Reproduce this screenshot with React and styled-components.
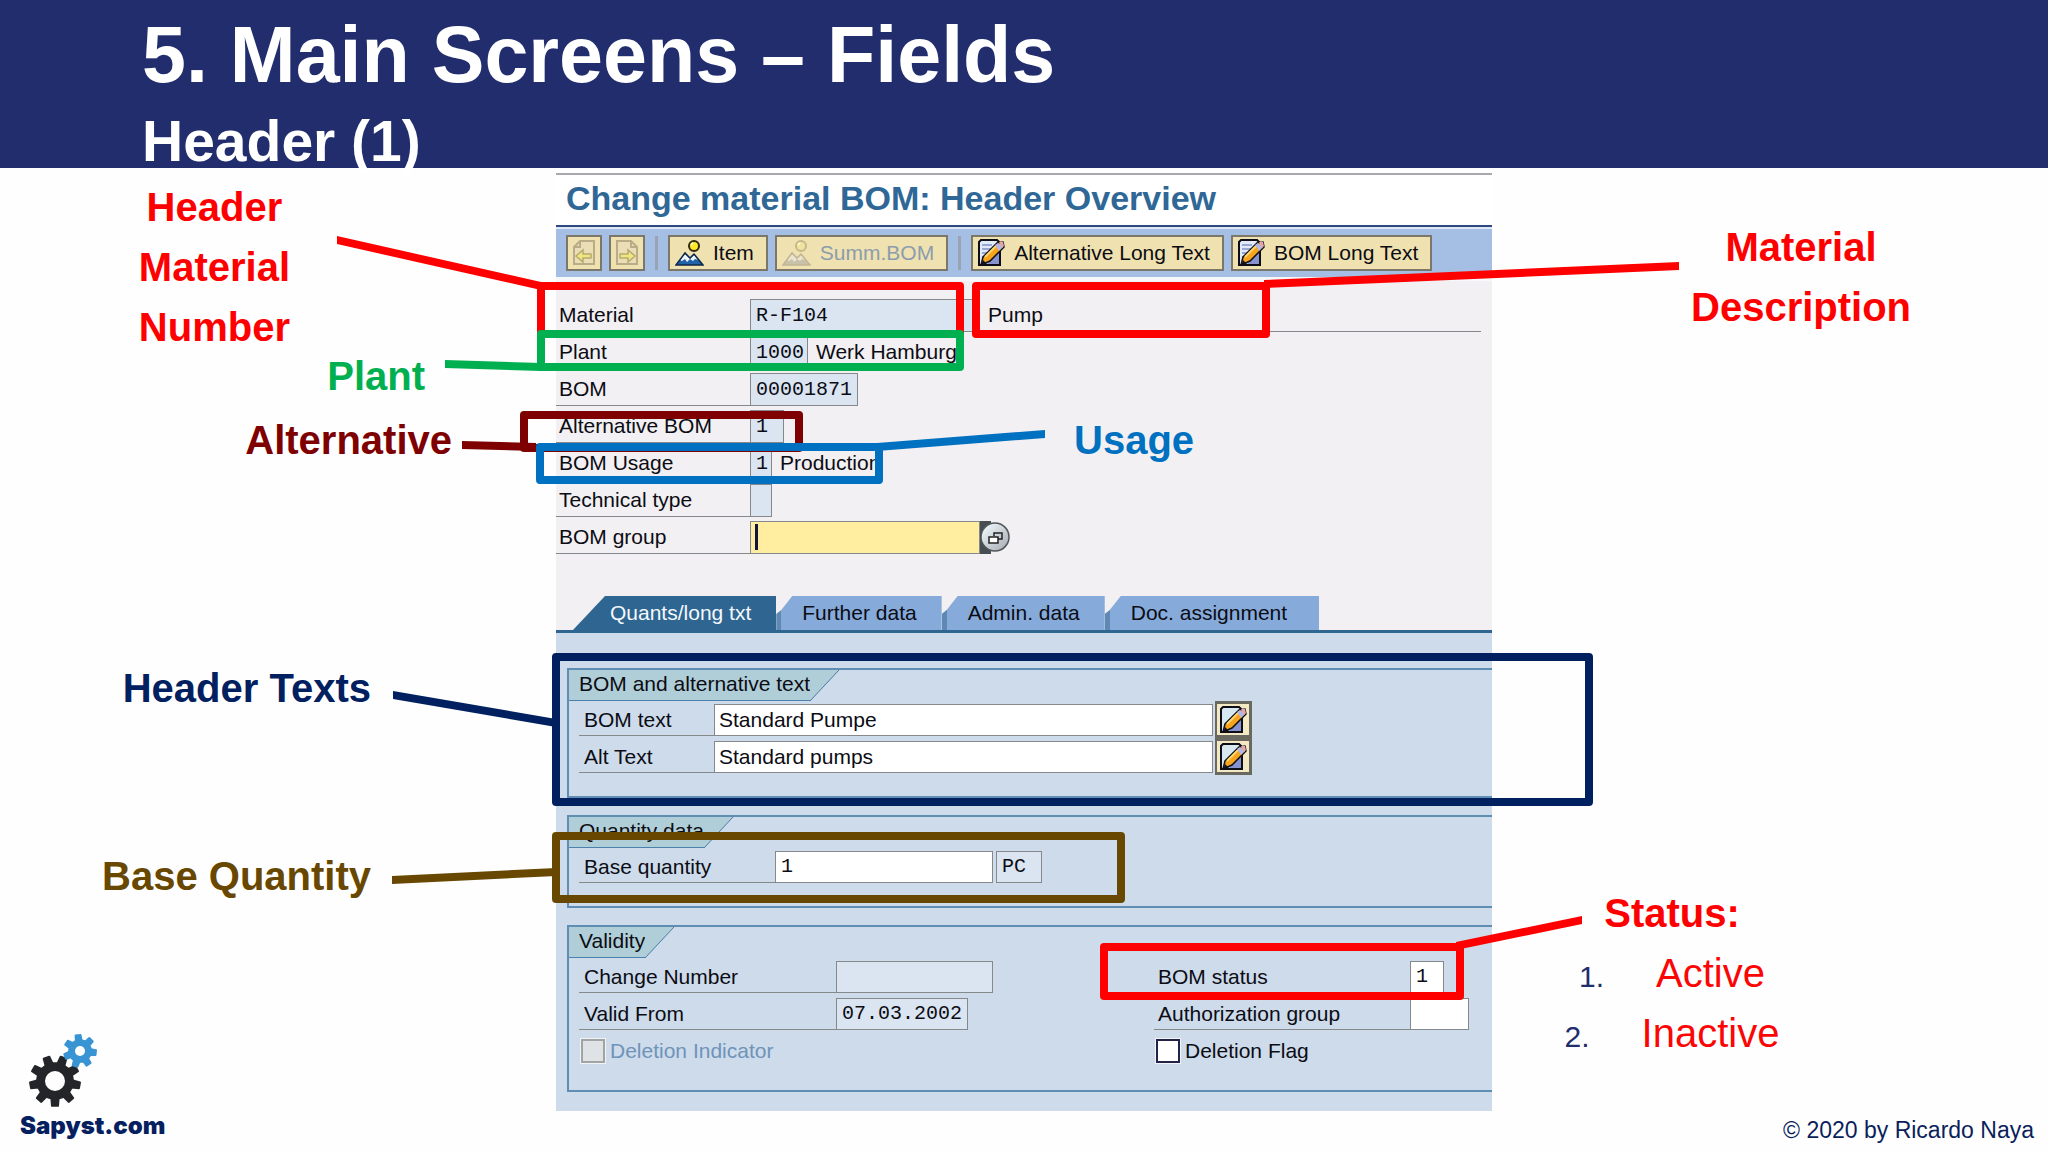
import React from 'react'
import styled, { createGlobalStyle } from 'styled-components';

const GlobalStyle = createGlobalStyle`
    * { box-sizing: border-box; }
    body {
        margin: 0;
        background: #fefefe;
        font-family: "Liberation Sans", Arial, sans-serif;
        overflow-x: hidden;
    }
    button, input {
        font: inherit;
        color: inherit;
        margin: 0;
        border-radius: 0;
    }
    h1, h2, p, ol { margin: 0; padding: 0; }
`

const Slide = styled.div`
    min-height: 100vh;
    display: flex;
    flex-direction: column;
`

const Banner = styled.header`
    background: #222d6d;
    color: white;
    height: 168px;
    padding: 10px 0 0 142px;
`

const Title = styled.h1`
    font-size: 79px;
    line-height: 90px;
`

const Subtitle = styled.h2`
    margin-top: 9px;
    font-size: 57px;
    line-height: 64px;
`

const Main = styled.main`
    flex: 1;
    display: grid;
    grid-template-columns: 139fr 234fr 139fr;
`

const Side = styled.div`
    min-width: 0;
    display: flex;
    flex-direction: column;
`

const LeftLabels = styled.div`
    display: flex;
    flex-direction: column;
    align-items: flex-end;
    padding-top: 9px;
`

const Label = styled.p`
    font-size: 40px;
    font-weight: bold;
    text-align: center;
    line-height: ${p => p.$tall ? '60px' : '52px'};
    color: ${p => p.$color};
    margin-top: ${p => p.$top || 0}px;
    margin-right: ${p => p.$right || 0}px;
`

const RightLabel = styled.div`
    width: 220px;
    margin: 49px 0 0 199px;
`

const Status = styled.div`
    width: 218px;
    margin: 546px 0 0 71px;
    color: #fb0505;
`

const StatusList = styled.ol`
    list-style: none;
    font-size: 40px;
    line-height: 60px;
    li {
        display: flex;
        justify-content: center;
        align-items: baseline;
        gap: 52px;
    }
`

const Index = styled.span`
    font-size: 30px;
    line-height: 40px;
    color: #222d6d;
`

const Copyright = styled.p`
    margin-top: auto;
    padding: 0 14px 8px 0;
    text-align: right;
    font-size: 23px;
    line-height: 28px;
    color: #0b1f5c;
`

const Brand = styled.a`
    margin-top: auto;
    padding: 0 0 12px 20px;
    display: flex;
    flex-direction: column;
    align-items: flex-start;
    color: #05205f;
    text-decoration: none;
    font-family: Inter, "Liberation Sans", sans-serif;
    font-size: 24px;
    font-weight: 900;
    line-height: 28px;
    svg { margin: 0 0 2px 6px; }
`

/* SAP window */

const Window = styled.section`
    position: relative;
    align-self: start;
    margin-top: 4px;
    color: #0c0c14;
    font-size: 21px;
    padding-top: 1px;
`

const WindowTitle = styled.h2`
    border-top: 2px solid #a9a9ad;
    border-bottom: 2px solid #2a4a80;
    background: white;
    color: #2f6796;
    font-size: 34px;
    line-height: 46px;
    padding: 0 0 4px 10px;
    white-space: nowrap;
`

const Toolbar = styled.div`
    display: flex;
    align-items: center;
    gap: 7px;
    height: 54px;
    padding-left: 10px;
    background: #a4bfe3;
    border-top: 2px solid #dfe8f4;
    border-bottom: 4px solid #f6f7fa;
`

const ToolButton = styled.button`
    display: flex;
    align-items: center;
    justify-content: ${p => p.$square ? 'center' : 'flex-start'};
    gap: 9px;
    width: ${p => p.$square ? '36px' : 'auto'};
    height: 36px;
    padding: ${p => p.$square ? '0' : '0 12px 0 5px'};
    border: 2px solid #7c7869;
    background: #f0e1b0;
    white-space: nowrap;
    color: ${p => p.disabled ? '#8b9dac' : '#0c0c14'};
    svg { flex: none; }
`

const Separator = styled.span`
    width: 3px;
    height: 34px;
    margin: 0 3px;
    background: #9aa3b3;
`

const Form = styled.div`
    background: #f2f0f2;
    padding: 18px 0 42px;
    display: flex;
    flex-direction: column;
    gap: 4px;
`

const Row = styled.div`
    display: flex;
    height: ${p => p.$short ? '32px' : '33px'};
`

const FieldLabel = styled.label`
    flex: none;
    width: ${p => p.$width || 194}px;
    padding-left: ${p => p.$indent || 3}px;
    line-height: 32px;
    border-bottom: 1px solid #85898c;
    white-space: nowrap;
`

const Field = styled.input`
    flex: none;
    width: ${p => p.$width}px;
    padding: 0 0 1px ${p => p.$sans ? 4 : 5}px;
    border: 1px solid #85898c;
    outline: none;
    background: ${p => p.$bg || '#dae5f1'};
    font-family: ${p => p.$sans ? '"Liberation Sans", sans-serif' : '"Liberation Mono", monospace'};
    font-size: ${p => p.$sans ? '21px' : '20px'};
`

const Describe = styled.span`
    padding-left: 8px;
    line-height: 32px;
    white-space: nowrap;
`

const Material = styled(Describe)`
    flex: 1;
    margin-right: 11px;
    padding-left: 11px;
    border-bottom: 1px solid #85898c;
`

const GroupField = styled.div`
    display: flex;
    position: relative;
`

const Caret = styled.span`
    position: absolute;
    left: 5px;
    top: 3px;
    width: 3px;
    height: 26px;
    background: #14143c;
`

const HelpButton = styled.button`
    padding: 0;
    border: 0;
    background: none;
    height: 33px;
    svg { display: block; }
`

const Tabs = styled.div`
    display: flex;
    padding-left: 17px;
    background: #f2f0f2;
    border-bottom: 3px solid #2e6591;
`

const Tab = styled.button`
    height: 34px;
    border: 0;
    padding: 0 25px 0 26px;
    white-space: nowrap;
    background: linear-gradient(to right, #5f88b3 5px, #86abda 5px);
    clip-path: polygon(0 18px, 5px 14px, 16px 0, 100% 0, 100% 100%, 0 100%);
    &:last-child { padding-right: 32px; }
`

const ActiveTab = styled(Tab)`
    padding: 0 25px 0 37px;
    color: #f4f8fc;
    background: #2e6591;
    clip-path: polygon(32px 0, 100% 0, 100% 100%, 0 100%);
`

const TabPanel = styled.div`
    display: flex;
    flex-direction: column;
    gap: 17px;
    padding: 35px 0 19px 11px;
    background: #cddbea;
`

const Group = styled.section`
    border: solid #5f8db4;
    border-width: 2px 0 2px 2px;
    padding-bottom: 23px;
`

const Tag = styled.div`
    display: flex;
    height: 31px;
    margin-bottom: 3px;
    svg { display: block; }
`

const TagText = styled.span`
    padding: 0 0 2px 10px;
    line-height: 28px;
    background: #b0ced7;
    border-bottom: 1px solid #4b82ad;
    white-space: nowrap;
`

const Rows = styled.div`
    display: flex;
    flex-direction: column;
    gap: 5px;
    padding-left: ${p => p.$flush ? 0 : 10}px;
`

const Columns = styled.div`
    display: flex;
    gap: 161px;
`

const EditButton = styled.button`
    width: 37px;
    height: 37px;
    margin: -3px 0 0 2px;
    padding: 0;
    display: grid;
    place-items: center;
    border: 3px solid #69695f;
    border-left-width: 2px;
    background: #f5e9c3;
`

const Unit = styled(Field)`
    margin-left: 3px;
`

const CheckLabel = styled.label`
    display: flex;
    align-items: center;
    gap: 5px;
    line-height: 32px;
    padding-left: 2px;
    color: ${p => p.$muted ? '#6f93b9' : 'inherit'};
`

const Check = styled.input`
    appearance: none;
    width: 24px;
    height: 24px;
    outline: 1px solid #f0f4f8;
    border: 2px solid #23234a;
    background: white;
    &:disabled {
        border-color: #a2a4a4;
        background: #dfe3e6;
    }
`

/* annotations drawn over the window */

const Callout = styled.div`
    position: absolute;
    left: ${p => p.$x}px;
    top: ${p => p.$y}px;
    width: ${p => p.$w}px;
    height: ${p => p.$h}px;
    border: 8px solid ${p => p.$color};
    border-radius: 4px;
    pointer-events: none;
`

const Leaders = styled.svg`
    position: absolute;
    left: 0;
    top: 0;
    overflow: visible;
    pointer-events: none;
`

const UsageLabel = styled(Label)`
    position: absolute;
    left: 518px;
    top: 242px;
`

const RED = '#fe0000'
const GREEN = '#00b050'
const MAROON = '#7f0000'
const BLUE = '#0070c0'
const NAVY = '#002060'
const BROWN = '#684700'

const callouts = [
  { x: -19, y: 110, w: 427, h: 56, color: RED },
  { x: 416, y: 110, w: 298, h: 56, color: RED },
  { x: -19, y: 158, w: 427, h: 41, color: GREEN },
  { x: -36, y: 239, w: 283, h: 41, color: MAROON },
  { x: -20, y: 271, w: 347, h: 41, color: BLUE },
  { x: -4, y: 481, w: 1041, h: 153, color: NAVY },
  { x: -4, y: 660, w: 573, h: 71, color: BROWN },
  { x: 544, y: 771, w: 364, h: 57, color: RED },
]

const leaders = [
  { from: [-219, 68], to: [-15, 114], color: RED },
  { from: [708, 112], to: [1123, 94], color: RED },
  { from: [-111, 192], to: [-15, 195], color: GREEN },
  { from: [-94, 273], to: [-20, 275], color: MAROON },
  { from: [321, 275], to: [489, 262], color: BLUE },
  { from: [-163, 523], to: [0, 551], color: NAVY },
  { from: [-164, 708], to: [0, 700], color: BROWN },
  { from: [900, 774], to: [1026, 748], color: RED },
]

// leader ends are cut vertically
const leaderPath = ([x1, y1], [x2, y2]) =>
  `M${x1} ${y1 - 4}L${x2} ${y2 - 4}V${y2 + 4}L${x1} ${y1 + 4}Z`

const NoteIcon = ({ plain }) => (
  <svg width="27" height="28" viewBox="0 0 27 28">
    <path d="M1 3L3 1H19L22 4V26H1Z" fill={plain ? '#d7e8f0' : '#e3e9f8'} stroke="#0d0d18" strokeWidth="2" />
    <path d="M21 11V25H9Z" fill="#8793cf" />
    {!plain && <path d="M4 6H14M4 10H13M4 14H10M4 18H8" stroke="#7e92c8" strokeWidth="1.5" />}
    <path d="M3 26L5 18L19 4L25 3L26 8L12 22Z" fill="#f6a31d" stroke="#111118" strokeWidth="1.5" />
    <path d="M7 18L18 7" stroke="#ffd66d" strokeWidth="2" />
    <path d="M17 6L20 4L25 8L21 12Z" fill="#b3b8e2" />
    <path d="M21 3L25 3L26 7L24 9Z" fill="#e6a4ad" />
    <path d="M3 27L5 21L9 25Z" fill="#111118" />
  </svg>
)

const HillIcon = ({ muted }) => (
  <svg width="29" height="28" viewBox="0 0 29 28">
    <path d="M1 26L10 14L15 19L19 15L28 26Z" fill={muted ? '#c9c2a8' : '#2162a8'} />
    <path d="M5 21L10 15L15 20L19 16L23 21L20 20L18 22L15 20L12 23L10 20L7 22Z" fill={muted ? '#ebe5d0' : '#eef6fc'} />
    <path d="M1 26L10 14L15 19L19 15L28 26Z" fill="none" stroke={muted ? '#c0b694' : '#0e2947'} strokeWidth="1.5" />
    <circle cx="19" cy="7" r="5" fill={muted ? '#f0e2a0' : '#ffe72b'} stroke={muted ? '#c5b98b' : '#2e2908'} strokeWidth="2" />
    <path d="M16 6L18 4" stroke="#fffbc0" strokeWidth="2" />
  </svg>
)

const PageIcon = ({ next }) => (
  <svg width="24" height="28" viewBox="0 0 24 28">
    <g transform={next ? 'translate(24 0) scale(-1 1)' : undefined}>
      <path d="M8 2H22V25H2V8Z" fill="#ebdeb6" stroke="#b9ad88" strokeWidth="2" />
      <path d="M8 2V8H2" fill="none" stroke="#b9ad88" strokeWidth="2" />
    </g>
    <path
      d={next ? 'M5 15H13V11L20 17L13 23V19H5Z' : 'M19 15H11V11L4 17L11 23V19H19Z'}
      fill="#efe67c" stroke="#b8ab72" strokeWidth="1.5"
    />
  </svg>
)

const HelpIcon = () => (
  <svg width="31" height="33" viewBox="0 0 31 33">
    <defs>
      <linearGradient id="ball" x1="0" y1="0" x2="1" y2="1">
        <stop offset="0.2" stopColor="#e6eef4" />
        <stop offset="1" stopColor="#a3a8ad" />
      </linearGradient>
    </defs>
    <rect width="11" height="33" fill="#484d52" />
    <circle cx="15" cy="16" r="14" fill="url(#ball)" stroke="#50555a" strokeWidth="1.5" />
    <path d="M14 15V12H22V18H18" fill="none" stroke="#222" strokeWidth="1.5" />
    <rect x="9" y="16" width="9" height="6" fill="white" stroke="#222" strokeWidth="1.5" />
  </svg>
)

const gearPath = (cx, cy, r, inner, teeth, turn) => {
  const step = (Math.PI * 2) / teeth
  const pts = []
  for (let i = 0; i < teeth; i++) {
    const a = i * step + turn
    const corners = [[-0.29, inner], [-0.17, r], [0.17, r], [0.29, inner]]
    corners.forEach(([k, d]) => {
      pts.push(`${(cx + d * Math.cos(a + k * step)).toFixed(1)} ${(cy + d * Math.sin(a + k * step)).toFixed(1)}`)
    })
  }
  return 'M' + pts.join('L') + 'Z'
}

const Gears = () => (
  <svg width="74" height="78" viewBox="0 0 74 78">
    <path d={gearPath(29, 49, 25, 18, 9, Math.PI / 2)} fill="#242528" stroke="#242528" strokeWidth="2" strokeLinejoin="round" />
    <circle cx="29" cy="49" r="10" fill="#fefefe" />
    <path d={gearPath(54, 19, 16, 11, 7, 0.1)} fill="#3894d2" stroke="#3894d2" strokeWidth="2" strokeLinejoin="round" />
    <circle cx="54" cy="19" r="5" fill="#fefefe" />
  </svg>
)

const GroupTag = ({ children }) => (
  <Tag>
    <TagText>{children}</TagText>
    <svg width="30" height="31" viewBox="0 0 30 31">
      <path d="M0 0H29L0 31Z" fill="#b0ced7" />
      <path d="M0 31L29 0" stroke="#4b7ba5" strokeWidth="1" />
    </svg>
  </Tag>
)

const App = () => {

  return (
    <Slide>
      <GlobalStyle />
      <Banner>
        <Title>5. Main Screens – Fields</Title>
        <Subtitle>Header (1)</Subtitle>
      </Banner>
      <Main>
        <Side>
          <LeftLabels>
            <Label $tall $color={RED} $right={266}>Header<br />Material<br />Number</Label>
            <Label $color={GREEN} $top={-7} $right={131}>Plant</Label>
            <Label $color={MAROON} $top={12} $right={104}>Alternative</Label>
            <Label $color={NAVY} $top={196} $right={185}>Header Texts</Label>
            <Label $color={BROWN} $top={136} $right={185}>Base Quantity</Label>
          </LeftLabels>
          <Brand href="#">
            <Gears />
            Sapyst.com
          </Brand>
        </Side>

        <Window>
          <WindowTitle>Change material BOM: Header Overview</WindowTitle>
          <Toolbar>
            <ToolButton $square disabled aria-label="Previous"><PageIcon /></ToolButton>
            <ToolButton $square disabled aria-label="Next"><PageIcon next /></ToolButton>
            <Separator />
            <ToolButton><HillIcon />Item</ToolButton>
            <ToolButton disabled><HillIcon muted />Summ.BOM</ToolButton>
            <Separator />
            <ToolButton><NoteIcon />Alternative Long Text</ToolButton>
            <ToolButton><NoteIcon />BOM Long Text</ToolButton>
          </Toolbar>

          <Form>
            <Row>
              <FieldLabel htmlFor="material">Material</FieldLabel>
              <Field id="material" $width={227} defaultValue="R-F104" readOnly />
              <Material>Pump</Material>
            </Row>
            <Row>
              <FieldLabel htmlFor="plant">Plant</FieldLabel>
              <Field id="plant" $width={58} defaultValue="1000" readOnly />
              <Describe>Werk Hamburg</Describe>
            </Row>
            <Row>
              <FieldLabel htmlFor="bom">BOM</FieldLabel>
              <Field id="bom" $width={108} defaultValue="00001871" readOnly />
            </Row>
            <Row>
              <FieldLabel htmlFor="altbom">Alternative BOM</FieldLabel>
              <Field id="altbom" $width={34} defaultValue="1" readOnly />
            </Row>
            <Row>
              <FieldLabel htmlFor="usage">BOM Usage</FieldLabel>
              <Field id="usage" $width={22} defaultValue="1" readOnly />
              <Describe>Production</Describe>
            </Row>
            <Row>
              <FieldLabel htmlFor="tech">Technical type</FieldLabel>
              <Field id="tech" $width={22} readOnly />
            </Row>
            <Row>
              <FieldLabel htmlFor="group">BOM group</FieldLabel>
              <GroupField>
                <Field id="group" $width={230} $bg="#ffee9f" />
                <Caret />
                <HelpButton aria-label="Search help"><HelpIcon /></HelpButton>
              </GroupField>
            </Row>
          </Form>

          <Tabs>
            <ActiveTab>Quants/long txt</ActiveTab>
            <Tab>Further data</Tab>
            <Tab>Admin. data</Tab>
            <Tab>Doc. assignment</Tab>
          </Tabs>

          <TabPanel>
            <Group>
              <GroupTag>BOM and alternative text</GroupTag>
              <Rows>
                <Row $short>
                  <FieldLabel htmlFor="bomtext" $width={135} $indent={5}>BOM text</FieldLabel>
                  <Field id="bomtext" $sans $width={499} $bg="white" defaultValue="Standard Pumpe" />
                  <EditButton aria-label="Edit BOM text"><NoteIcon plain /></EditButton>
                </Row>
                <Row $short>
                  <FieldLabel htmlFor="alttext" $width={135} $indent={5}>Alt Text</FieldLabel>
                  <Field id="alttext" $sans $width={499} $bg="white" defaultValue="Standard pumps" />
                  <EditButton aria-label="Edit alternative text"><NoteIcon plain /></EditButton>
                </Row>
              </Rows>
            </Group>

            <Group>
              <GroupTag>Quantity data</GroupTag>
              <Rows>
                <Row $short>
                  <FieldLabel htmlFor="quantity" $width={196} $indent={5}>Base quantity</FieldLabel>
                  <Field id="quantity" $width={218} $bg="white" defaultValue="1" />
                  <Unit aria-label="Unit" $width={46} defaultValue="PC" readOnly />
                </Row>
              </Rows>
            </Group>

            <Group>
              <GroupTag>Validity</GroupTag>
              <Columns>
                <Rows>
                  <Row $short>
                    <FieldLabel htmlFor="change" $width={257} $indent={5}>Change Number</FieldLabel>
                    <Field id="change" $width={157} readOnly />
                  </Row>
                  <Row $short>
                    <FieldLabel htmlFor="from" $width={257} $indent={5}>Valid From</FieldLabel>
                    <Field id="from" $width={132} defaultValue="07.03.2002" readOnly />
                  </Row>
                  <Row $short>
                    <CheckLabel $muted><Check type="checkbox" disabled />Deletion Indicator</CheckLabel>
                  </Row>
                </Rows>
                <Rows $flush>
                  <Row $short>
                    <FieldLabel htmlFor="status" $width={256} $indent={4}>BOM status</FieldLabel>
                    <Field id="status" $width={34} $bg="white" defaultValue="1" />
                  </Row>
                  <Row $short>
                    <FieldLabel htmlFor="auth" $width={256} $indent={4}>Authorization group</FieldLabel>
                    <Field id="auth" $width={59} $bg="white" />
                  </Row>
                  <Row $short>
                    <CheckLabel><Check type="checkbox" />Deletion Flag</CheckLabel>
                  </Row>
                </Rows>
              </Columns>
            </Group>
          </TabPanel>

          {callouts.map((c, i) => (
            <Callout key={i} $x={c.x} $y={c.y} $w={c.w} $h={c.h} $color={c.color} />
          ))}
          <Leaders width="936" height="938">
            {leaders.map((l, i) => (
              <path key={i} d={leaderPath(l.from, l.to)} fill={l.color} />
            ))}
          </Leaders>
          <UsageLabel $color={BLUE}>Usage</UsageLabel>
        </Window>

        <Side>
          <RightLabel>
            <Label $tall $color={RED}>Material<br />Description</Label>
          </RightLabel>
          <Status>
            <Label $tall $color={RED}>Status:</Label>
            <StatusList>
              <li><Index>1.</Index>Active</li>
              <li><Index>2.</Index>Inactive</li>
            </StatusList>
          </Status>
          <Copyright>© 2020 by Ricardo Naya</Copyright>
        </Side>
      </Main>
    </Slide>
  )
}

export default App
